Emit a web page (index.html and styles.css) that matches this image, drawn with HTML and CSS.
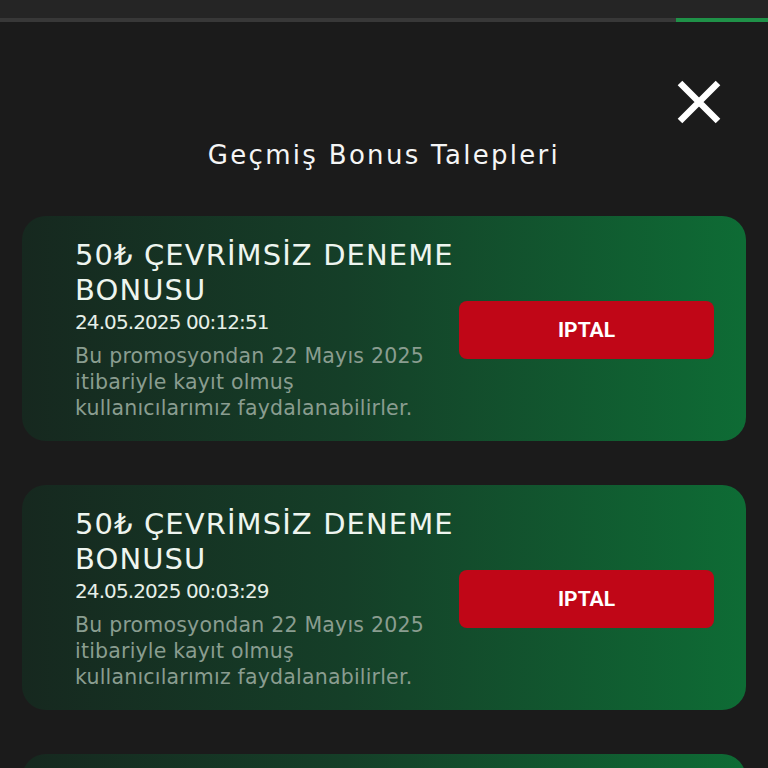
FILE: index.html
```html
<!DOCTYPE html>
<html lang="tr">

<head>
  <meta charset="UTF-8">
  <meta name="viewport" content="width=device-width, initial-scale=1.0">
  <title>Geçmiş Bonus Talepleri</title>
  <link rel="stylesheet" href="styles.css">
</head>

<body>
  <div class="topbar"></div>
  <div class="tab-line">
    <span class="tab-active"></span>
  </div>

  <div class="modal">
    <div class="modal-head">
      <button type="button" class="close-btn" aria-label="Kapat">
        <svg width="44" height="44" viewBox="0 0 44 44">
          <path d="M3 3 L41 41 M41 3 L3 41" stroke="#ffffff" stroke-width="6.5" fill="none" />
        </svg>
      </button>
      <h1>Geçmiş Bonus Talepleri</h1>
    </div>

    <div class="bonus-list">
      <div class="bonus-card">
        <div class="bonus-info">
          <h2>50₺ ÇEVRİMSİZ DENEME BONUSU</h2>
          <div class="bonus-date">24.05.2025 00:12:51</div>
          <p>Bu promosyondan 22 Mayıs 2025 itibariyle kayıt olmuş kullanıcılarımız faydalanabilirler.</p>
        </div>
        <button type="button" class="cancel-btn">IPTAL</button>
      </div>

      <div class="bonus-card">
        <div class="bonus-info">
          <h2>50₺ ÇEVRİMSİZ DENEME BONUSU</h2>
          <div class="bonus-date">24.05.2025 00:03:29</div>
          <p>Bu promosyondan 22 Mayıs 2025 itibariyle kayıt olmuş kullanıcılarımız faydalanabilirler.</p>
        </div>
        <button type="button" class="cancel-btn">IPTAL</button>
      </div>

      <div class="bonus-card">
        <div class="bonus-info">
          <h2>50₺ ÇEVRİMSİZ DENEME BONUSU</h2>
          <div class="bonus-date">23.05.2025 23:48:10</div>
          <p>Bu promosyondan 22 Mayıs 2025 itibariyle kayıt olmuş kullanıcılarımız faydalanabilirler.</p>
        </div>
        <button type="button" class="cancel-btn">IPTAL</button>
      </div>
    </div>
  </div>
</body>

</html>
```

FILE: styles.css
```css
body {
  font-family: 'DejaVu Sans', 'Noto Sans', sans-serif;
  background-color: #1b1b1b;
  color: #fff;
  margin: 0;
  padding: 0;
  overflow: hidden;
}

.topbar {
  height: 18px;
  background-color: #252525;
}

.tab-line {
  height: 4px;
  background-color: #383838;
  display: flex;
  justify-content: flex-end;
}

.tab-active {
  width: 92px;
  background-color: #1f9148;
}

.modal {
  padding: 0 22px;
}

.modal-head {
  display: flex;
  flex-direction: column;
  align-items: center;
}

.close-btn {
  align-self: flex-end;
  background: none;
  border: none;
  padding: 0;
  margin: 58px 25px 0 0;
  width: 44px;
  height: 44px;
  cursor: pointer;
}

.close-btn svg {
  display: block;
}

h1 {
  margin: 16px 0 0;
  font-size: 26px;
  line-height: 30px;
  font-weight: 400;
  letter-spacing: 2.3px;
  color: #f5f5f5;
}

.bonus-list {
  display: flex;
  flex-direction: column;
  gap: 44px;
  margin-top: 46px;
}

.bonus-card {
  display: flex;
  align-items: center;
  height: 225px;
  box-sizing: border-box;
  padding: 22px 32px 20px 53px;
  border-radius: 24px;
  background: linear-gradient(90deg, #16281f 0%, #153f28 45%, #0e6c35 100%);
}

.bonus-info {
  width: 384px;
  flex-shrink: 0;
  align-self: flex-start;
}

.bonus-info h2 {
  margin: 0;
  font-size: 29px;
  line-height: 35px;
  font-weight: 400;
  color: #eef5ef;
  letter-spacing: 1.1px;
}

.bonus-date {
  font-size: 20px;
  line-height: 28px;
  color: #e6efe8;
  letter-spacing: -0.9px;
}

.bonus-info p {
  margin: 7px 0 0;
  max-width: 365px;
  font-size: 20.5px;
  line-height: 26px;
  letter-spacing: 0.2px;
  color: #8a9d90;
}

.cancel-btn {
  margin-left: auto;
  width: 255px;
  height: 58px;
  border: none;
  border-radius: 8px;
  background-color: #c00617;
  color: #fff;
  font-family: 'Roboto', sans-serif;
  font-weight: 700;
  font-size: 21px;
  cursor: pointer;
}
```
